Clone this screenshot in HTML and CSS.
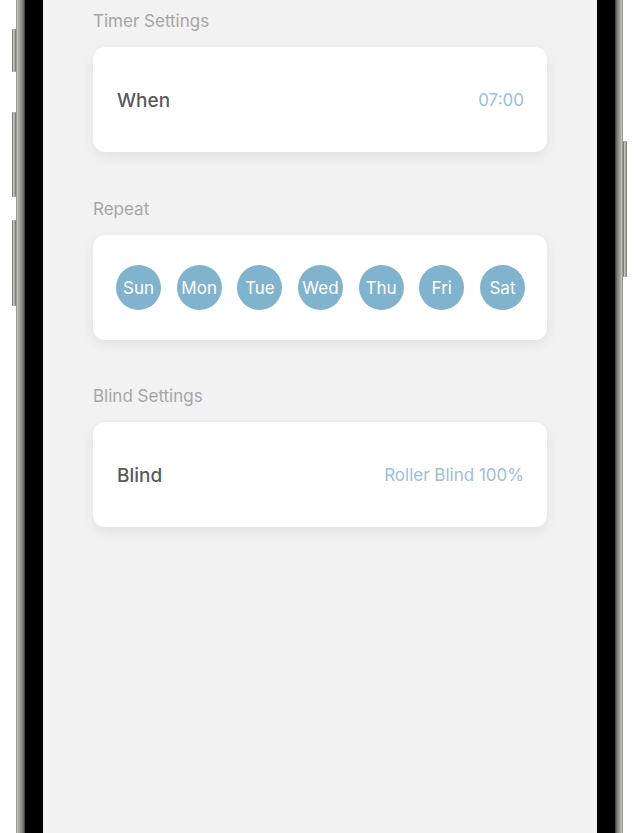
FILE: index.html
```html
<!DOCTYPE html>
<html>
<head>
<meta charset="utf-8">
<link rel="stylesheet" href="styles.css">
</head>
<body>
<div class="stage">
  <div class="btn btn-a"></div>
  <div class="btn btn-b"></div>
  <div class="btn btn-c"></div>
  <div class="btn btn-r"></div>
  <div class="phone">
    <div class="edge edge-left"></div>
    <div class="bezel"></div>
    <div class="screen">
      <section class="section">
        <div class="label">Timer Settings</div>
        <div class="card row">
          <span class="title">When</span>
          <span class="value">07:00</span>
        </div>
      </section>
      <section class="section">
        <div class="label">Repeat</div>
        <div class="card days">
          <span class="day">Sun</span>
          <span class="day">Mon</span>
          <span class="day">Tue</span>
          <span class="day">Wed</span>
          <span class="day">Thu</span>
          <span class="day">Fri</span>
          <span class="day">Sat</span>
        </div>
      </section>
      <section class="section section-last">
        <div class="label">Blind Settings</div>
        <div class="card row">
          <span class="title">Blind</span>
          <span class="value">Roller Blind 100%</span>
        </div>
      </section>
    </div>
    <div class="bezel"></div>
    <div class="edge edge-right"></div>
  </div>
</div>
</body>
</html>
```
FILE: styles.css
```css
html, body {
  margin: 0;
  padding: 0;
  background: #ffffff;
  height: 100%;
  overflow: hidden;
}
body {
  font-family: Inter, "Noto Sans", "Liberation Sans", sans-serif;
}
.stage {
  position: relative;
  height: 833px;
  padding-left: 16px;
}
.phone {
  display: flex;
  width: 607px;
  height: 833px;
}
.edge {
  height: 100%;
}
.edge-left {
  width: 9px;
  background: linear-gradient(to right, #6e6e6a 0px, #c9c9c3 1px, #b5b5ae 2px, #9a9a94 4px, #8b8b86 6px, #5e5e5b 8px, #2a2a2a 9px);
}
.edge-right {
  width: 8px;
  background: linear-gradient(to right, #2a2a2a 0px, #5e5e5b 1px, #8b8b86 3px, #a3a39c 5px, #c9c9c3 7px, #6e6e6a 8px);
}
.bezel {
  width: 18px;
  background: #000;
  height: 100%;
}
.screen {
  flex: 1;
  background: #f2f2f2;
  padding: 11px 50px 0 50px;
  display: flex;
  flex-direction: column;
  gap: 47px;
}
.section {
  display: flex;
  flex-direction: column;
  gap: 16px;
}
.section-last {
  margin-top: -1px;
}
.label {
  font-size: 17px;
  line-height: 20px;
  color: #a6a6a6;
}
.card {
  background: #fff;
  border-radius: 12px;
  height: 105px;
  box-shadow: 0 4px 12px rgba(0, 0, 0, 0.08);
  box-sizing: border-box;
}
.row {
  display: flex;
  align-items: center;
  justify-content: space-between;
  padding: 1px 23px 0 24px;
}
.title {
  font-size: 19px;
  font-weight: 500;
  color: #5a5a5a;
}
.value {
  font-size: 17px;
  color: #99c1d8;
}
.days {
  display: flex;
  align-items: center;
  justify-content: space-between;
  padding: 0 22px 0 23px;
}
.day {
  width: 45px;
  height: 45px;
  border-radius: 50%;
  background: #80b3cd;
  color: #fff;
  font-size: 17px;
  font-weight: 400;
  display: flex;
  align-items: center;
  justify-content: center;
}
.btn {
  position: absolute;
  width: 4px;
  border-radius: 1px;
  background: linear-gradient(to right, #5a5a57, #c8c8c2 40%, #9c9c96 80%, #4a4a48);
}
.btn-a { left: 12px; top: 29px; height: 43px; }
.btn-b { left: 12px; top: 112px; height: 85px; }
.btn-c { left: 12px; top: 220px; height: 86px; }
.btn-r { left: 623px; top: 141px; height: 136px; }
```
